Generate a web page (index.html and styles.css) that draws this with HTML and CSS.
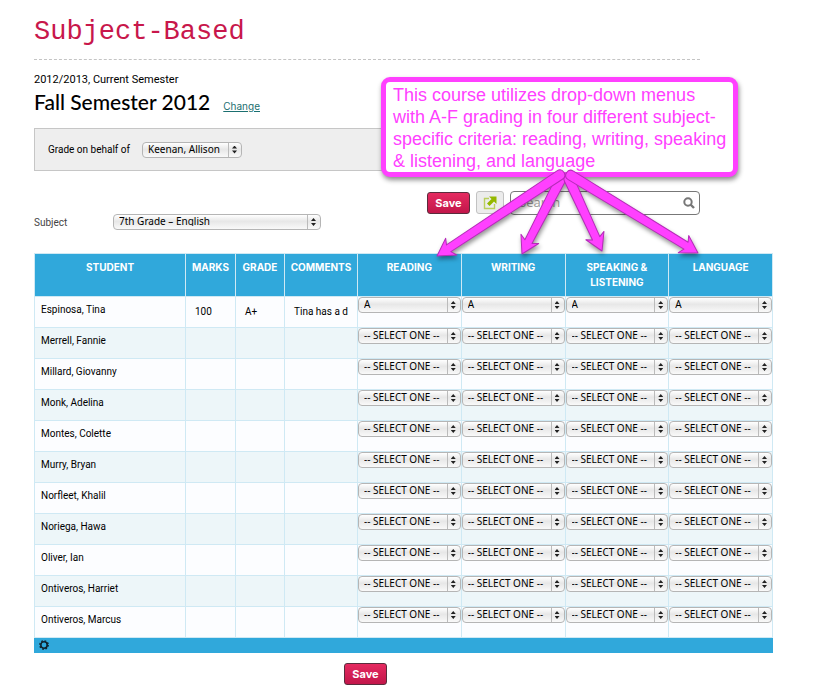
FILE: index.html
```html
<!DOCTYPE html>
<html lang="en">
<head>
<meta charset="utf-8">
<title>Subject-Based</title>
<link rel="stylesheet" href="styles.css">
</head>
<body>
<main class="page">
  <div class="intro">
    <h1>Subject-Based</h1>
    <p class="term">2012/2013, Current Semester</p>
    <div class="semester"><h2>Fall Semester 2012</h2><a href="#change">Change</a></div>
    <div class="behalf">
      <label for="teacher">Grade on behalf of</label>
      <span class="select teacher"><select id="teacher"><option>Keenan, Allison</option></select></span>
    </div>
    <div class="toolbar">
      <label for="subject">Subject</label>
      <span class="select subject"><select id="subject"><option>7th Grade – English</option></select></span>
      <div class="actions">
        <button class="save" type="button">Save</button>
        <button class="export" type="button" aria-label="Export">
          <svg width="14" height="14" viewBox="0 0 14 14"><path d="M6 2.5H1.5v10h10V8" fill="none" stroke="#b9cf5c" stroke-width="1.4"/><path d="M6 .5h7.500v7.500L11 5.500 6.500 10 4 7.500 8.500 3z" fill="#94b800"/></svg>
        </button>
        <div class="search">
          <input type="search" placeholder="Search" aria-label="Search">
          <svg width="12" height="12" viewBox="0 0 12 12"><circle cx="5" cy="5" r="3.700" fill="none" stroke="#777" stroke-width="2"/><path d="M7.500 7.500L11 11" stroke="#777" stroke-width="2.400"/></svg>
        </div>
      </div>
    </div>
  </div>

  <table class="grades">
    <colgroup><col class="c-student"><col class="c-marks"><col class="c-grade"><col class="c-comments"><col><col><col><col></colgroup>
    <thead>
      <tr><th>STUDENT</th><th>MARKS</th><th>GRADE</th><th>COMMENTS</th><th>READING</th><th>WRITING</th><th>SPEAKING &amp; LISTENING</th><th>LANGUAGE</th></tr>
    </thead>
    <tbody id="rows"></tbody>
    <tfoot>
      <tr><td colspan="8"><svg width="10" height="10" viewBox="0 0 10 10"><circle cx="5" cy="5" r="3.200" fill="none" stroke="#10222c" stroke-width="1.600"/><circle cx="5" cy="5" r="4.200" fill="none" stroke="#10222c" stroke-width="1.400" stroke-dasharray="1.650 1.650"/></svg></td></tr>
    </tfoot>
  </table>
  <div class="bottom"><button class="save" type="button">Save</button></div>

  <aside class="callout">
    <p>This course utilizes drop-down menus<br>with A-F grading in four different subject-<br>specific criteria: reading, writing, speaking<br>&amp; listening, and language</p>
    <svg class="arrows" width="290" height="100" viewBox="425 165 290 100">
      <g fill="#ff40ff" stroke="#b52bb8" stroke-width="1" stroke-linejoin="round">
        <path transform="translate(522 254) rotate(117.400)" d="M0 0L-17-10L-14-4L-84-5Q-89-5-89 0T-84 5L-14 4L-17 10Z"/>
        <path transform="translate(602 251) rotate(65.300)" d="M0 0L-17-10L-14-4L-79-5Q-84-5-84 0T-79 5L-14 4L-17 10Z"/>
        <path transform="translate(437 256) rotate(146.600)" d="M0 0L-17-10L-14-4L-147-5Q-152-5-152 0T-147 5L-14 4L-17 10Z"/>
        <path transform="translate(698 253) rotate(31.400)" d="M0 0L-17-10L-14-4L-149-5Q-154-5-154 0T-149 5L-14 4L-17 10Z"/>
      </g>
    </svg>
  </aside>
</main>
<script src="grades.js"></script>
</body>
</html>
```
FILE: styles.css
```css
* { box-sizing: border-box; }
body { margin: 0; background: #fff; color: #000; font: 10px/16px Roboto, sans-serif; }
.page { position: relative; padding: 12px 43px 6px 34px; }
.intro { margin-right: 73px; }
h1 { margin: 0; height: 48px; border-bottom: 1px dashed #c4c4c4; color: #c8174b; font: 27px/40px "Liberation Mono", monospace; }
.term { margin: 12px 0 0; font-size: 11px; }
.semester { display: flex; align-items: baseline; gap: 13px; height: 40px; }
h2 { margin: 0; font: 500 21px/28px Lato, sans-serif; }
.semester a { color: #1b6f70; font-family: Inter, sans-serif; }
.behalf { display: flex; align-items: center; gap: 12px; height: 43px; padding: 0 13px; background: #eee; border: 1px solid #c6c6c6; }
.toolbar { display: flex; align-items: flex-end; height: 59px; }
.toolbar label { width: 79px; color: #444; line-height: 15px; }
.actions { display: flex; align-items: center; align-self: center; gap: 6px; margin: 4px 0 0 auto; }

.select { position: relative; display: block; height: 16px; }
.select select { display: block; width: 100%; height: 16px; margin: 0; padding: 0 15px 3px 5px; appearance: none; border: 1px solid #b5b5b5; border-radius: 4px; background: linear-gradient(#fff, #e7e7e7 45%, #f9f9f9); color: #000; font: 10px/12px "Noto Sans", sans-serif; }
.select::before, .select::after { content: ""; position: absolute; pointer-events: none; }
.select::before { right: 13px; top: 1px; bottom: 1px; border-left: 1px solid #bbb; }
.select::after { right: 5px; top: 4px; width: 5px; height: 8px; background: #222; clip-path: polygon(50% 0, 100% 38%, 0 38%, 0 62%, 100% 62%, 50% 100%, 0 62%, 0 38%); }
.teacher { width: 100px; }
.subject { width: 208px; }

button { padding: 0; cursor: pointer; }
.save { width: 43px; height: 22px; border: 1px solid #5a2c3c; border-radius: 3px; background: linear-gradient(#e52a60, #c2164a); color: #fff; font: 700 11px/16px Inter, sans-serif; }
.export { display: grid; place-items: center; width: 28px; height: 23px; border: 1px solid #c2c2c2; border-radius: 3px; background: #ececec; }
.search { position: relative; width: 190px; height: 24px; }
.search input { width: 100%; height: 24px; padding: 0 24px 2px 8px; border: 1px solid #777; border-radius: 4px; background: #fff; font: 13px/20px "Open Sans", sans-serif; }
.search input::placeholder { color: #999; }
.search svg { position: absolute; right: 5px; top: 6px; }

.grades { width: 100%; margin-top: 23px; border-collapse: collapse; table-layout: fixed; }
.c-student { width: 151px; }
.c-marks { width: 50px; }
.c-grade { width: 49px; }
.c-comments { width: 73px; }
.grades th, .grades td { border: 1px solid #cfe9f4; vertical-align: top; }
.grades th { height: 43px; padding: 6px 4px; background: #30a8db; color: #fff; font: 700 10px/15px Inter, sans-serif; }
.grades tbody td { height: 31px; padding: 0; background: #fcfdff; }
.grades tbody tr:nth-child(even) td { background: #edf6f9; }
.grades tbody .name { padding: 5px 6px; }
.grades tbody .value { padding: 7px 9px; white-space: nowrap; }
.grades tfoot td { height: 15px; padding: 2px 4px; background: #30a8db; border-color: #30a8db; }
.grades tfoot svg { display: block; }
.bottom { display: flex; justify-content: center; padding: 10px 76px 0 0; }

.callout { position: absolute; left: 381px; top: 77px; width: 357px; height: 100px; padding: 2px 7px; border: 5px solid #ff40ff; border-radius: 9px; background: #fff; color: #ff40ff; box-shadow: 1px 3px 5px rgba(0, 0, 0, .45); }
.callout p { margin: 0; white-space: nowrap; font: 18px/22px "Liberation Sans", sans-serif; }
.arrows { position: absolute; left: 39px; top: 83px; filter: drop-shadow(1px 3px 2px rgba(0, 0, 0, .4)); pointer-events: none; }
```
FILE: grades.js
```js
const students = [
  { name: "Espinosa, Tina", marks: "100", grade: "A+", comments: "Tina has a d", rating: "A" },
  { name: "Merrell, Fannie" }, { name: "Millard, Giovanny" }, { name: "Monk, Adelina" },
  { name: "Montes, Colette" }, { name: "Murry, Bryan" }, { name: "Norfleet, Khalil" },
  { name: "Noriega, Hawa" }, { name: "Oliver, Ian" }, { name: "Ontiveros, Harriet" },
  { name: "Ontiveros, Marcus" }
];
const criteria = ["Reading", "Writing", "Speaking & Listening", "Language"];

document.getElementById("rows").innerHTML = students.map(s => {
  const values = [s.marks, s.grade, s.comments].map(v => `<td class="value">${v || ""}</td>`).join("");
  const menus = criteria.map(c => {
    const options = ["-- SELECT ONE --", "A", "B", "C", "D", "F"]
      .map(o => `<option${o === s.rating ? " selected" : ""}>${o}</option>`).join("");
    return `<td><span class="select"><select aria-label="${c}: ${s.name}">${options}</select></span></td>`;
  }).join("");
  return `<tr><td class="name">${s.name}</td>${values}${menus}</tr>`;
}).join("");
```
